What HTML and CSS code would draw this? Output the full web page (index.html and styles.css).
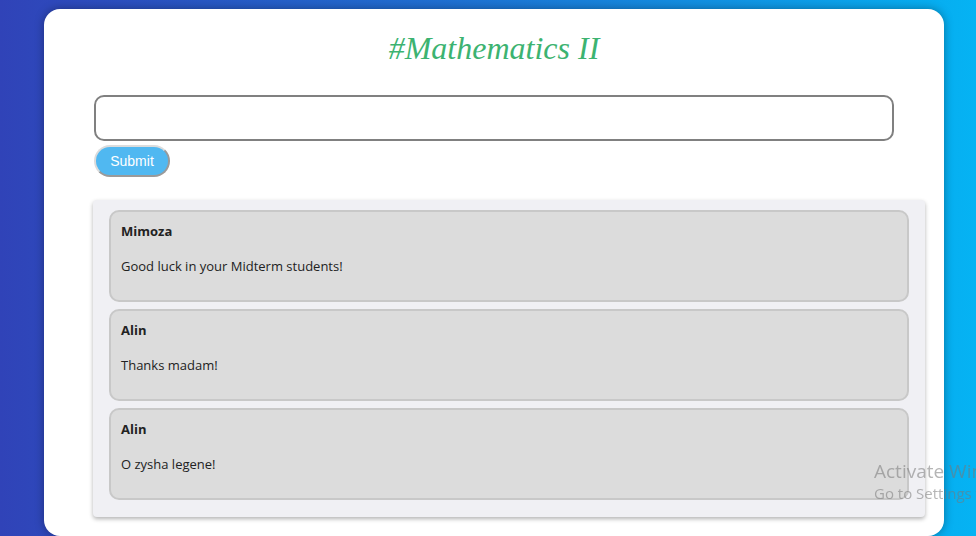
FILE: index.html
```html
<!DOCTYPE html>
<html lang="en">
<head>
<meta charset="utf-8">
<title>#Mathematics II</title>
<link rel="stylesheet" href="styles.css">
</head>
<body>
  <main class="card">
    <h1 class="title">#Mathematics II</h1>
    <form class="post-form">
      <input class="post-input" type="text">
      <button class="submit-btn" type="button">Submit</button>
    </form>
    <section class="messages">
      <article class="message">
        <div class="author">Mimoza</div>
        <div class="text">Good luck in your Midterm students!</div>
      </article>
      <article class="message">
        <div class="author">Alin</div>
        <div class="text">Thanks madam!</div>
      </article>
      <article class="message">
        <div class="author">Alin</div>
        <div class="text">O zysha legene!</div>
      </article>
    </section>
  </main>
  <div class="watermark">
    <div class="wm-title">Activate Windows</div>
    <div class="wm-sub">Go to Settings to activate Windows.</div>
  </div>
</body>
</html>
```
FILE: styles.css
```css
html, body {
  margin: 0;
  height: 100%;
  overflow: hidden;
}
body {
  background: linear-gradient(to right, #3043b8 0%, #1f6fd2 45%, #05b3f3 100%);
  font-family: "Open Sans", "Liberation Sans", sans-serif;
}
.card {
  box-sizing: border-box;
  width: 900px;
  height: 527px;
  margin: 9px 0 0 44px;
  padding: 14px 0 0 50px;
  background: #fff;
  border-radius: 16px;
  box-shadow: 0 0 10px rgba(0, 0, 0, 0.35);
}
.title {
  margin: 0 0 0 -50px;
  text-align: center;
  font-family: "Liberation Serif", "Times New Roman", serif;
  font-style: italic;
  font-weight: normal;
  font-size: 32px;
  line-height: 50px;
  color: #3cb371;
}
.post-form {
  display: flex;
  flex-direction: column;
  align-items: flex-start;
  gap: 4px;
  margin-top: 22px;
}
.post-input {
  box-sizing: border-box;
  width: 800px;
  height: 46px;
  border: 2px solid #808080;
  border-radius: 10px;
  background: #fff;
  margin: 0;
}
.submit-btn {
  box-sizing: border-box;
  width: 76px;
  height: 32px;
  padding: 0;
  background: #50b8f1;
  color: #fff;
  font-family: "Liberation Sans", Arial, sans-serif;
  font-size: 14px;
  border: 2px solid #9a9a9a;
  border-top-color: #dcdcdc;
  border-left-color: #dcdcdc;
  border-radius: 16px;
}
.messages {
  box-sizing: border-box;
  width: 832px;
  margin: 23px 0 0 -1px;
  padding: 10px 16px 17px 16px;
  background: #f0f0f4;
  border-radius: 4px;
  box-shadow: 0 2px 4px rgba(0, 0, 0, 0.3);
  display: flex;
  flex-direction: column;
  gap: 7px;
}
.message {
  box-sizing: border-box;
  height: 92px;
  padding: 10px 10px 0 10px;
  background: #dcdcdc;
  border: 2px solid #c8c8c8;
  border-radius: 10px;
  color: #222;
  font-size: 13px;
}
.author {
  font-weight: bold;
  line-height: 18px;
}
.text {
  margin-top: 17px;
  line-height: 18px;
}
.watermark {
  position: fixed;
  left: 874px;
  top: 459px;
  white-space: nowrap;
  color: rgba(120, 120, 120, 0.55);
  font-family: "Open Sans", "Liberation Sans", sans-serif;
  pointer-events: none;
}
.wm-title {
  font-size: 19px;
  line-height: 24px;
}
.wm-sub {
  font-size: 15px;
  line-height: 20px;
}
```
